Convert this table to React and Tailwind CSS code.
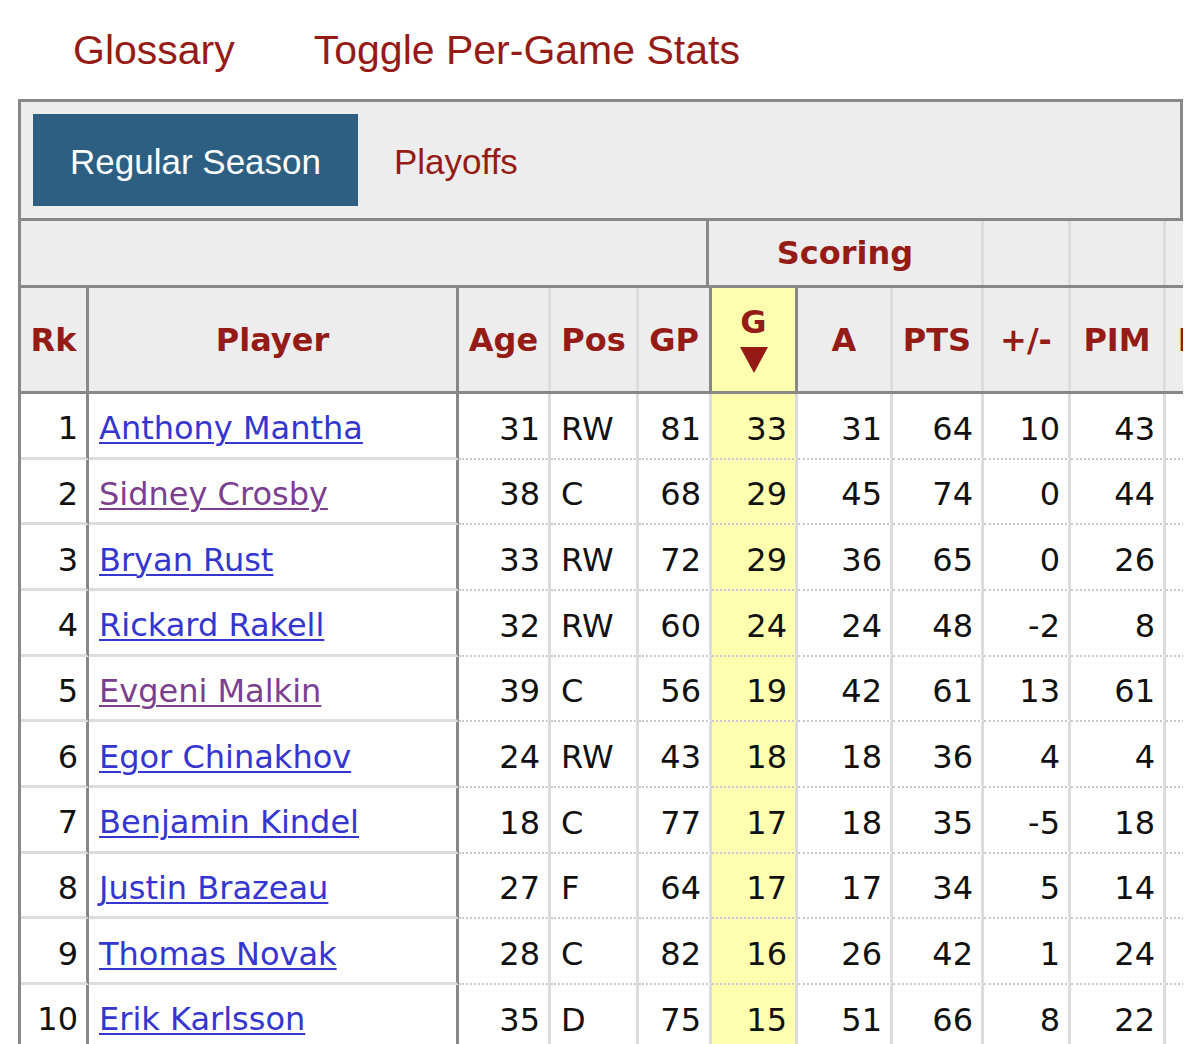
import React from "react";

const players = [
  { rk: 1, name: "Anthony Mantha", age: 31, pos: "RW", gp: 81, g: 33, a: 31, pts: 64, pm: 10, pim: 43 },
  { rk: 2, name: "Sidney Crosby", age: 38, pos: "C", gp: 68, g: 29, a: 45, pts: 74, pm: 0, pim: 44, visited: true },
  { rk: 3, name: "Bryan Rust", age: 33, pos: "RW", gp: 72, g: 29, a: 36, pts: 65, pm: 0, pim: 26 },
  { rk: 4, name: "Rickard Rakell", age: 32, pos: "RW", gp: 60, g: 24, a: 24, pts: 48, pm: -2, pim: 8 },
  { rk: 5, name: "Evgeni Malkin", age: 39, pos: "C", gp: 56, g: 19, a: 42, pts: 61, pm: 13, pim: 61, visited: true },
  { rk: 6, name: "Egor Chinakhov", age: 24, pos: "RW", gp: 43, g: 18, a: 18, pts: 36, pm: 4, pim: 4 },
  { rk: 7, name: "Benjamin Kindel", age: 18, pos: "C", gp: 77, g: 17, a: 18, pts: 35, pm: -5, pim: 18 },
  { rk: 8, name: "Justin Brazeau", age: 27, pos: "F", gp: 64, g: 17, a: 17, pts: 34, pm: 5, pim: 14 },
  { rk: 9, name: "Thomas Novak", age: 28, pos: "C", gp: 82, g: 16, a: 26, pts: 42, pm: 1, pim: 24 },
  { rk: 10, name: "Erik Karlsson", age: 35, pos: "D", gp: 75, g: 15, a: 51, pts: 66, pm: 8, pim: 22 },
];

// shared cell bits
const dotted = "border-b-2 [border-bottom-style:dotted] border-b-[#c9c9c9]";
const solid = "border-b-[3px] border-b-[#dcdcdc]";
const lightR = "border-r-[3px] border-r-[#dcdcdc]";
const darkR = "border-r-[3px] border-r-[#888]";

function SortArrow() {
  return (
    <svg width="28" height="26" viewBox="0 0 28 26">
      <polygon points="0,0 28,0 14,26" fill="#951a15" />
    </svg>
  );
}

function HeadCell({ className, children }) {
  return (
    <div className={`shrink-0 flex items-center justify-center ${className}`}>
      {children}
    </div>
  );
}

function DataCell({ className, children }) {
  return (
    <div className={`shrink-0 flex items-center pl-[10px] pr-[8px] pt-[6px] ${className}`}>
      {children}
    </div>
  );
}

export default function App() {
  return (
    <div className="w-[1200px] min-h-[1044px] bg-white pl-[18px] font-['DejaVu_Sans',Verdana,sans-serif]">
      {/* top links */}
      <div className="h-[99px] flex items-start pt-[30px] pl-[55px] gap-[79px] font-['Liberation_Sans',Arial,sans-serif] text-[41px] leading-none text-[#951b17]">
        <span>Glossary</span>
        <span>Toggle Per-Game Stats</span>
      </div>

      {/* season tabs */}
      <div className="w-[1165px] border-[3px] border-[#888] bg-[#ededed] h-[122px] pl-[12px] pt-[12px] flex items-start font-['Liberation_Sans',Arial,sans-serif] text-[35px] leading-none">
        <div className="w-[325px] h-[92px] bg-[#2c5f82] text-white flex items-center justify-center pt-[2px]">
          Regular Season
        </div>
        <div className="h-[92px] flex items-center pl-[36px] pt-[2px] text-[#951b17]">Playoffs</div>
      </div>

      {/* table */}
      <div className="w-[1165px] overflow-hidden border-l-[3px] border-[#888]">
        <div className="w-[1225px]">
          {/* over-header */}
          <div className="flex h-[67px] bg-[#ededed] border-b-[3px] border-b-[#888] text-[32px] font-bold text-[#951b17] leading-none">
            <HeadCell className={`w-[688px] ${darkR}`} />
            <HeadCell className={`w-[275px] ${lightR}`}>Scoring</HeadCell>
            <HeadCell className={`w-[87px] ${lightR}`} />
            <HeadCell className={`w-[95px] ${lightR}`} />
            <HeadCell className="w-[70px]" />
          </div>

          {/* column headers */}
          <div className="flex h-[106px] bg-[#ededed] border-b-[3px] border-b-[#888] text-[32px] font-bold text-[#951b17] leading-none">
            <HeadCell className={`w-[68px] ${darkR}`}>Rk</HeadCell>
            <HeadCell className={`w-[370px] ${darkR}`}>Player</HeadCell>
            <HeadCell className={`w-[92px] ${lightR}`}>Age</HeadCell>
            <HeadCell className={`w-[88px] ${lightR}`}>Pos</HeadCell>
            <HeadCell className={`w-[73px] ${darkR}`}>GP</HeadCell>
            <HeadCell className={`w-[86px] ${darkR} bg-[#ffffb0] flex-col gap-[9px]`}>
              <span>G</span>
              <SortArrow />
            </HeadCell>
            <HeadCell className={`w-[95px] ${lightR}`}>A</HeadCell>
            <HeadCell className={`w-[91px] ${lightR}`}>PTS</HeadCell>
            <HeadCell className={`w-[87px] ${lightR}`}>+/-</HeadCell>
            <HeadCell className={`w-[95px] ${lightR}`}>PIM</HeadCell>
            <HeadCell className="w-[70px]">EV</HeadCell>
          </div>

          {/* rows */}
          {players.map((p) => (
            <div key={p.rk} className="flex h-[65.67px] text-[32px] leading-none text-[#111]">
              <DataCell className={`w-[68px] justify-end ${darkR} ${solid}`}>{p.rk}</DataCell>
              <DataCell className={`w-[370px] ${darkR} ${solid}`}>
                <a
                  href="#"
                  className={`underline decoration-2 underline-offset-[3px] ${
                    p.visited ? "text-[#7b3f8f]" : "text-[#3535cf]"
                  }`}
                >
                  {p.name}
                </a>
              </DataCell>
              <DataCell className={`w-[92px] justify-end ${lightR} ${dotted}`}>{p.age}</DataCell>
              <DataCell className={`w-[88px] ${lightR} ${dotted}`}>{p.pos}</DataCell>
              <DataCell className={`w-[73px] justify-end ${lightR} ${dotted}`}>{p.gp}</DataCell>
              <DataCell className={`w-[86px] justify-end bg-[#ffffb0] ${lightR} ${dotted}`}>{p.g}</DataCell>
              <DataCell className={`w-[95px] justify-end ${lightR} ${dotted}`}>{p.a}</DataCell>
              <DataCell className={`w-[91px] justify-end ${lightR} ${dotted}`}>{p.pts}</DataCell>
              <DataCell className={`w-[87px] justify-end ${lightR} ${dotted}`}>{p.pm}</DataCell>
              <DataCell className={`w-[95px] justify-end ${lightR} ${dotted}`}>{p.pim}</DataCell>
              <DataCell className={`w-[70px] justify-end ${dotted}`} />
            </div>
          ))}
        </div>
      </div>
    </div>
  );
}
